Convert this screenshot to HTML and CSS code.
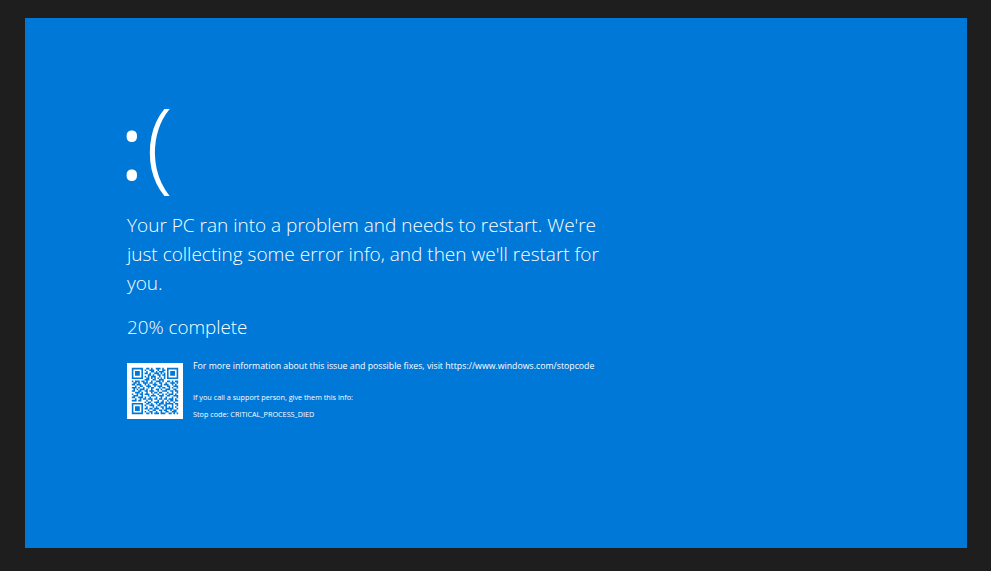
FILE: index.html
```html
<!DOCTYPE html>
<html lang="en">
<head>
<meta charset="utf-8">
<title>Stop code</title>
<link rel="stylesheet" href="styles.css">
</head>
<body>
<main class="screen">
  <div class="sad"><span class="colon">:</span><span class="paren">(</span></div>
  <p class="message">Your PC ran into a problem and needs to restart. We're just collecting some error info, and then we'll restart for you.</p>
  <p class="progress">20% complete</p>
  <section class="details">
    <svg class="qr" viewBox="0 0 35 35" aria-label="QR code">
      <rect width="35" height="35" fill="#fff"/>
      <path class="qr-finder" fill-rule="evenodd" d="M3 3h7v7H3zM4 4v5h5V4zM25 3h7v7h-7zM26 4v5h5V4zM3 25h7v7H3zM4 26v5h5v-5z"/>
      <path class="qr-finder" d="M5 5h3v3H5zM27 5h3v3h-3zM5 27h3v3H5z"/>
      <path class="qr-data" d="M12 3.5h2M15 3.5h1M18 3.5h3M22 3.5h1M11 4.5h1M14 4.5h3M19 4.5h1M22 4.5h2M12 5.5h1M15 5.5h2M18 5.5h1M20 5.5h3M11 6.5h2M14 6.5h1M17 6.5h3M21 6.5h1M23 6.5h1M13 7.5h2M16 7.5h1M19 7.5h2M22 7.5h2M11 8.5h1M13 8.5h1M15 8.5h3M20 8.5h1M23 8.5h1M12 9.5h2M15 9.5h1M17 9.5h1M19 9.5h1M21 9.5h1M23 9.5h1M11 10.5h3M16 10.5h2M20 10.5h3M3 11.5h1M5 11.5h3M9 11.5h2M12 11.5h1M15 11.5h1M18 11.5h3M22 11.5h1M25 11.5h2M28 11.5h1M30 11.5h2M4 12.5h2M7 12.5h1M10 12.5h3M14 12.5h2M17 12.5h1M20 12.5h2M24 12.5h1M27 12.5h3M31 12.5h1M3 13.5h2M6 13.5h3M11 13.5h1M13 13.5h1M16 13.5h3M21 13.5h1M23 13.5h3M28 13.5h1M30 13.5h1M5 14.5h1M8 14.5h2M12 14.5h3M17 14.5h1M19 14.5h3M25 14.5h2M29 14.5h3M3 15.5h3M7 15.5h1M10 15.5h1M13 15.5h1M15 15.5h2M20 15.5h1M22 15.5h2M26 15.5h1M28 15.5h1M31 15.5h1M4 16.5h1M6 16.5h1M8 16.5h3M12 16.5h1M15 16.5h1M18 16.5h2M21 16.5h1M24 16.5h3M29 16.5h2M3 17.5h2M7 17.5h2M11 17.5h2M14 17.5h3M19 17.5h1M22 17.5h3M27 17.5h2M30 17.5h2M5 18.5h3M9 18.5h1M12 18.5h1M15 18.5h1M17 18.5h2M20 18.5h2M25 18.5h1M28 18.5h1M31 18.5h1M3 19.5h1M6 19.5h1M8 19.5h2M11 19.5h3M16 19.5h1M19 19.5h1M22 19.5h1M24 19.5h1M26 19.5h3M30 19.5h1M4 20.5h3M9 20.5h1M13 20.5h1M15 20.5h3M20 20.5h3M25 20.5h2M29 20.5h3M3 21.5h2M7 21.5h3M11 21.5h1M14 21.5h1M18 21.5h1M21 21.5h1M24 21.5h1M28 21.5h1M31 21.5h1M5 22.5h1M8 22.5h1M10 22.5h2M13 22.5h3M17 22.5h2M20 22.5h2M23 22.5h2M26 22.5h3M30 22.5h1M3 23.5h3M7 23.5h2M12 23.5h1M15 23.5h1M19 23.5h1M22 23.5h1M25 23.5h1M27 23.5h2M30 23.5h2M11 24.5h1M13 24.5h2M17 24.5h3M21 24.5h2M24 24.5h1M26 24.5h1M29 24.5h1M12 25.5h2M15 25.5h1M18 25.5h1M20 25.5h3M24 25.5h5M30 25.5h2M11 26.5h1M14 26.5h3M19 26.5h2M23 26.5h2M28 26.5h1M31 26.5h1M12 27.5h1M16 27.5h1M18 27.5h1M21 27.5h2M24 27.5h1M26 27.5h1M28 27.5h1M30 27.5h1M11 28.5h2M14 28.5h2M17 28.5h3M22 28.5h1M24 28.5h5M31 28.5h1M13 29.5h1M16 29.5h2M20 29.5h2M23 29.5h2M27 29.5h1M29 29.5h2M11 30.5h1M14 30.5h2M18 30.5h1M21 30.5h1M24 30.5h2M28 30.5h3M12 31.5h2M15 31.5h1M17 31.5h3M21 31.5h3M26 31.5h2M29 31.5h1M31 31.5h1"/>
    </svg>
    <div class="info">
      <p class="more">For more information about this issue and possible fixes, visit https://www.windows.com/stopcode</p>
      <p class="fine support">If you call a support person, give them this info:</p>
      <p class="fine stop">Stop code: CRITICAL_PROCESS_DIED</p>
    </div>
  </section>
</main>
</body>
</html>
```
FILE: styles.css
```css
* { box-sizing: border-box; }
html, body { height: 100%; }
body {
  margin: 0;
  background: #1e1e1e;
  padding: 18px 24px 23px 25px;
  overflow: hidden;
  font-family: "Open Sans", "Noto Sans", sans-serif;
  color: #fff;
}
p { margin: 0; }
.screen {
  height: 530px;
  background: #0078d7;
  padding: 62px 0 0 102px;
}
.sad {
  display: flex;
  align-items: baseline;
  height: 131px;
  line-height: 122px;
  margin-left: -7px;
}
.colon { font-size: 90px; font-weight: 400; }
.paren { font-size: 100px; font-weight: 300; margin-left: 2px; }
.message {
  width: 490px;
  font-size: 19px;
  line-height: 29px;
  font-weight: 300;
}
.progress {
  margin-top: 15px;
  font-size: 18.8px;
  line-height: 29px;
  font-weight: 300;
}
.details {
  display: flex;
  gap: 10px;
  margin-top: 21px;
}
.qr { width: 56px; height: 56px; flex: none; display: block; filter: blur(0.3px); }
.qr-finder { fill: #0078d7; }
.qr-data { fill: none; stroke: #0078d7; stroke-width: 1; }
.more { font-size: 8.75px; line-height: 14px; font-weight: 400; margin-top: -4px; white-space: nowrap; }
.fine { font-size: 7.25px; line-height: 11px; font-weight: 400; white-space: nowrap; }
.support { margin-top: 19px; }
.stop { margin-top: 6px; }
```
